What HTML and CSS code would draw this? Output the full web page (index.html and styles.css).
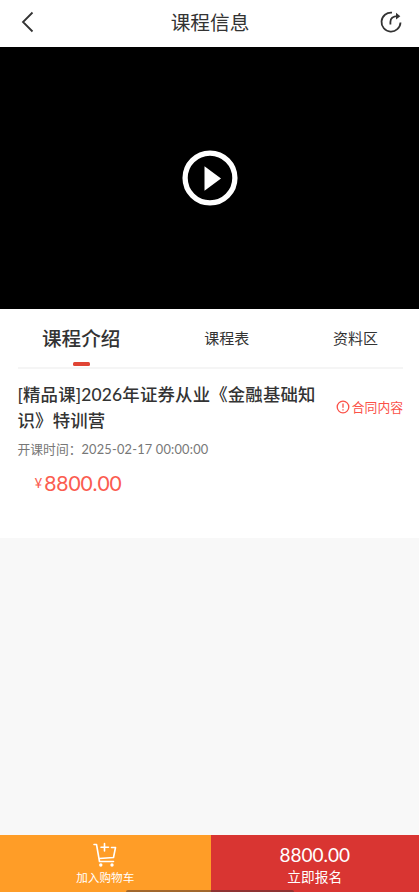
FILE: index.html
```html
<!DOCTYPE html>
<html lang="zh-CN">
<head>
<meta charset="utf-8">
<title>课程信息</title>
<link rel="stylesheet" href="styles.css">
</head>
<body>
<div class="page">
  <header class="nav">
    <svg class="nav-back" width="16" height="24" viewBox="0 0 16 24"><path d="M12.500 2.500 3 12l9.500 9.500"/></svg>
    <h1 class="nav-title">课程信息</h1>
    <svg class="nav-share" width="24" height="24" viewBox="0 0 24 24"><path d="M13 2.600A9.500 9.500 0 1 0 21.500 12.500M11.400 14.500V12C11.400 8.500 13.500 6.300 19 6.200"/><path class="solid" d="M17 2.700 21.300 6.200 17 9.500z"/></svg>
  </header>
  <div class="video">
    <svg width="56" height="56" viewBox="0 0 56 56"><circle cx="28" cy="28" r="24.900" fill="none" stroke="#fff" stroke-width="5.300"/><path d="M22.500 16.200v24.500L39 28.400z" fill="#fff"/></svg>
  </div>
  <main class="content">
    <nav class="tabs">
      <span class="tab tab-active">课程介绍</span>
      <span class="tab">课程表</span>
      <span class="tab">资料区</span>
    </nav>
    <div class="course">
      <h2 class="course-title">[精品课]2026年证券从业《金融基础知识》特训营</h2>
      <a class="contract"><svg width="14" height="14" viewBox="0 0 14 14"><circle cx="7" cy="7" r="5.800"/><path d="M7 3.500v4.300M7 9.200v1.400"/></svg><span>合同内容</span></a>
    </div>
    <p class="time">开课时间：<span class="time-num">2025-02-17 00:00:00</span></p>
    <p class="price"><span class="yen">¥</span><span>8800.00</span></p>
  </main>
  <footer class="actions">
    <div class="action cart">
      <svg width="26" height="26" viewBox="0 0 26 26"><path d="M2 2.500h2.500L7.500 19.500H21.500M7.500 16.500 21.500 15.500 23.500 5.500H19.500M12.500 1.500v7.500M9 5.200h7.500"/><circle cx="8.800" cy="23" r="1.700"/><circle cx="20" cy="23" r="1.700"/></svg>
      <span class="cart-label">加入购物车</span>
    </div>
    <div class="action enroll">
      <span class="enroll-price">8800.00</span>
      <span class="enroll-label">立即报名</span>
    </div>
    <i class="home-bar"></i>
  </footer>
</div>
</body>
</html>
```
FILE: styles.css
```css
* { box-sizing: border-box; margin: 0; padding: 0; }
body { background: #f8f8f8; font-family: "Noto Sans CJK SC", sans-serif; color: #333; }
svg { display: block; flex: none; }
.page { height: 892px; display: flex; flex-direction: column; overflow: hidden; }
.nav { height: 47px; flex: none; padding: 0 16px 3px 20px; background: #fff; display: flex; align-items: center; justify-content: space-between; }
.nav-title { font-size: 19.7px; font-weight: 400; line-height: 28px; padding: 0 0 1px 5px; }
.nav svg { fill: none; stroke: #333; stroke-width: 1.8; }
.nav .solid { fill: #333; stroke: none; }
.video { height: 262px; flex: none; background: #000; display: flex; align-items: center; justify-content: center; }
.content { height: 229px; flex: none; padding: 0 16px 0 17.500px; background: #fff; }
.tabs { height: 60px; border-bottom: 2px solid #f5f5f5; display: flex; justify-content: space-between; padding: 0 25px 0 24.500px; }
.tab { height: 58px; line-height: 57px; font-size: 15px; }
.tab-active { position: relative; font-size: 19.6px; font-weight: 500; }
.tab-active::after { content: ""; position: absolute; left: 31px; bottom: 1px; width: 17px; height: 4px; border-radius: 1.5px; background: #e04434; }
.course { margin-top: 13px; display: flex; justify-content: space-between; align-items: center; }
.course-title { width: 304px; font-family: Lato, "Noto Sans CJK SC", sans-serif; font-size: 17.4px; line-height: 25.5px; font-weight: 500; letter-spacing: .18px; }
.contract { display: flex; align-items: center; gap: 2px; color: #fb5148; font-size: 12.8px; line-height: 20px; white-space: nowrap; padding-bottom: 1px; }
.contract svg { fill: none; stroke: #fb5148; stroke-width: 1.3; }
.time { margin-top: 6px; font-size: 12.8px; line-height: 20px; color: #777; white-space: nowrap; }
.time-num { font-family: Lato, sans-serif; letter-spacing: .2px; }
.price { margin: 8px 0 0 17px; display: flex; align-items: center; height: 32px; gap: 2px; color: #fb5c50; font: 21px/32px Lato, sans-serif; letter-spacing: -.1px; }
.yen { font-size: 13.5px; }
.actions { position: relative; height: 57.500px; flex: none; margin-top: auto; display: flex; color: #fff; }
.action { display: flex; flex-direction: column; align-items: center; }
.cart { width: 210.500px; padding-top: 7px; background: #ff9d27; }
.cart svg { fill: none; stroke: #fff; stroke-width: 1.6; stroke-linecap: round; stroke-linejoin: round; }
.cart circle { fill: #fff; stroke: none; }
.cart-label { font-size: 11.6px; line-height: 18px; }
.enroll { flex: 1; padding-top: 8px; background: #d93532; }
.enroll-price { font: 19px/24px Lato, sans-serif; }
.enroll-label { font-size: 13.7px; line-height: 18px; }
.home-bar { position: absolute; left: 126px; bottom: 0; width: 168px; height: 2px; background: rgba(70, 50, 50, .5); border-radius: 2px 2px 0 0; }
```
